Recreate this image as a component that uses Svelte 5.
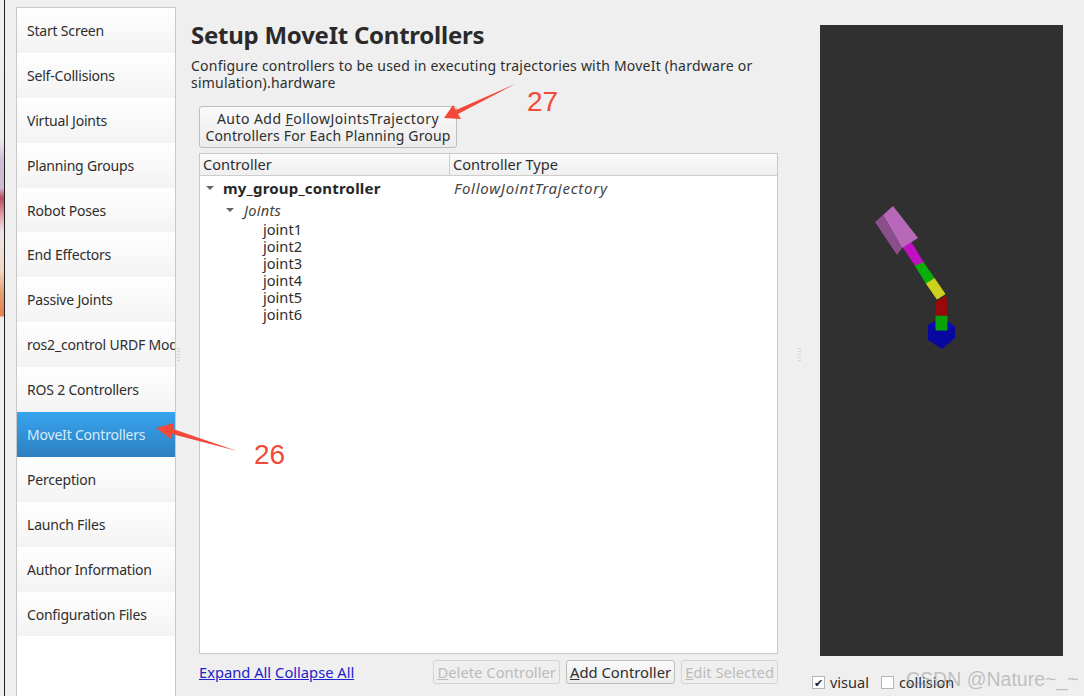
<script lang="ts">
  const steps = ['Start Screen', 'Self-Collisions', 'Virtual Joints', 'Planning Groups', 'Robot Poses', 'End Effectors', 'Passive Joints', 'ros2_control URDF Modifications', 'ROS 2 Controllers', 'MoveIt Controllers', 'Perception', 'Launch Files', 'Author Information', 'Configuration Files'];
  const joints = ['joint1', 'joint2', 'joint3', 'joint4', 'joint5', 'joint6'];
  const active = 'MoveIt Controllers';

  // robot arm, bottom to top
  const links = [
    { points: '76,126 87,126 87,140 76,140', color: '#0aa00a' },
    { points: '76,112 86,106 87,125 76,125', color: '#980a0a' },
    { points: '66,93 74,88 85,104 77,109', color: '#d0d020' },
    { points: '55,75 63,72 74,88 66,93', color: '#0ab00a' },
    { points: '43,57 51,52 63,72 55,75', color: '#c010c0' }
  ];
</script>

<div class="window">
  <div class="strip"></div>
  <div class="edge"></div>

  <nav class="steps">
    {#each steps as s}
      <div class="step" class:active={s === active}>{s}</div>
    {/each}
  </nav>

  <main class="content">
    <h1>Setup MoveIt Controllers</h1>
    <p class="desc">Configure controllers to be used in executing trajectories with MoveIt (hardware or simulation).hardware</p>

    <button class="btn auto"><span class="wide">Auto Add <u>F</u>ollowJointsTrajectory</span><br />Controllers For Each Planning Group</button>

    <div class="table">
      <div class="thead">
        <div class="th first">Controller</div>
        <div class="th">Controller Type</div>
      </div>
      <div class="tbody">
        <div class="row group">
          <span class="caret"></span>
          <span class="name">my_group_controller</span>
          <span class="type">FollowJointTrajectory</span>
        </div>
        <div class="row sub"><span class="caret"></span><em>Joints</em></div>
        <ul class="joints">
          {#each joints as j}<li>{j}</li>{/each}
        </ul>
      </div>
    </div>

    <div class="actions">
      <a href="#expand">Expand All</a>
      <a href="#collapse">Collapse All</a>
      <div class="spacer"></div>
      <button class="btn small off"><u>D</u>elete Controller</button>
      <button class="btn small"><u>A</u>dd Controller</button>
      <button class="btn small off"><u>E</u>dit Selected</button>
    </div>
  </main>

  <aside class="preview">
    <div class="viewport">
      <svg class="robot" viewBox="0 0 110 170" width="110" height="170">
        <polygon points="68,135 76,131 87,131 95,137 95,148 82,159 68,150" fill="#0808a0" />
        <polygon points="68,135 82,141 95,137 87,131 76,131" fill="#0a0ab8" />
        {#each links as l}
          <polygon points={l.points} fill={l.color} stroke={l.color} stroke-width="1" />
        {/each}
        <polygon points="23,25 33,16 58,48 42,58" fill="#b868b8" />
        <polygon points="15,32 23,25 42,58 37,65" fill="#8a4f8a" />
      </svg>
    </div>
    <div class="checks">
      <label class="check"><span class="box">✔</span>visual</label>
      <label class="check"><span class="box"></span>collision</label>
    </div>
  </aside>

  <!-- annotations pasted over the screenshot -->
  <svg class="notes" viewBox="0 0 1084 696" width="1084" height="696">
    <polygon points="515,84 458,114 461,119 444,118 453,105 456,110" fill="#f2493b" />
    <polygon points="237,451 172,434 171,439 156,428 174,423 173,429" fill="#f2493b" />
  </svg>
  <span class="num n27">27</span>
  <span class="num n26">26</span>
  <span class="handle h1"></span>
  <span class="handle h2"></span>
  <span class="mark">CSDN @Nature~_~</span>
</div>

<style>
  :global(body) { margin: 0; background: #efefef; }
  .window { position: relative; display: flex; width: 1084px; height: 696px; overflow: hidden; background: #efefef; color: #2e2e2e; font-family: "Noto Sans", "Open Sans", sans-serif; font-size: 14px; }
  .strip { width: 4px; flex-shrink: 0; background: linear-gradient(#f2f0f2 0, #efe8ee 140px, #cdbdd6 160px, #d0b8d0 188px, #b84a5c 198px, #e0a0a8 215px, #ece6e6 232px, #f2d8c4 270px, #e89a6a 295px, #e5824f 316px, #efefef 317px); }
  .edge { width: 1px; background: #222; flex-shrink: 0; }

  .steps { width: 158px; margin: 7px 0 0 11px; background: #fff; border: 1px solid #c8c8c8; border-bottom: none; flex-shrink: 0; overflow: hidden; }
  .step { box-sizing: border-box; height: 44.9px; padding-left: 10px; line-height: 46px; white-space: nowrap; overflow: hidden; background: linear-gradient(#fff, #f3f3f3); letter-spacing: -0.2px; }
  .step.active { background: linear-gradient(#37a4ee, #2d7fc0); color: #d5ecfb; }

  .content { width: 587px; margin-left: 15px; flex-shrink: 0; display: flex; flex-direction: column; }
  h1 { margin: 19px 0 0; font-size: 24px; line-height: 32px; font-weight: 700; color: #2a2a2a; letter-spacing: -0.25px; }
  .desc { margin: 6px 0 0; width: 584px; font-size: 14px; line-height: 17px; letter-spacing: 0.22px; }

  .btn { box-sizing: border-box; border: 1px solid #bdbdbd; border-radius: 3px; background: linear-gradient(#fafafa, #ececec); color: #2e2e2e; font: inherit; padding: 0; }
  .auto { align-self: flex-start; margin: 15px 0 0 8px; width: 258px; height: 42px; line-height: 17px; letter-spacing: 0.17px; }
  .wide { letter-spacing: 0.45px; }

  .table { margin: 5px 0 0 8px; height: 501px; box-sizing: border-box; border: 1px solid #c8c8c8; background: #fff; }
  .thead { display: flex; height: 21px; border-bottom: 1px solid #cdcdcd; background: linear-gradient(#fbfbfb, #efefef); line-height: 21px; font-size: 14.6px; }
  .th { padding-left: 3px; }
  .th.first { width: 246px; border-right: 1px solid #cdcdcd; }
  .row { display: flex; align-items: center; }
  .caret { width: 0; height: 0; border: 4px solid transparent; border-top: 4px solid #666; border-bottom: none; }
  .group { height: 23px; padding-left: 6px; font-size: 15px; }
  .name { margin-left: 9px; width: 231px; font-weight: 700; letter-spacing: 0.2px; color: #262626; }
  .type { font-style: italic; color: #444; letter-spacing: 0.75px; }
  .sub { height: 17px; margin-top: 2px; padding-left: 26px; font-size: 14.5px; }
  .sub em { margin-left: 10px; color: #444; letter-spacing: 0.3px; }
  .joints { margin: 3px 0 0; padding: 0 0 0 63px; list-style: none; line-height: 17px; font-size: 14.6px; }

  .actions { display: flex; align-items: center; gap: 6px; height: 24px; margin: 6px 0 0 8px; font-size: 14.7px; }
  .actions a { color: #2222cc; margin-right: -2px; }
  .spacer { flex: 1; }
  .small { height: 24px; padding: 0 3px; white-space: nowrap; font-size: 14.8px; }
  .off { color: #bbb; border-color: #d4d4d4; background: #efefef; }

  .preview { margin-left: 42px; width: 243px; flex-shrink: 0; }
  .viewport { margin-top: 25px; height: 631px; background: #303030; position: relative; }
  .robot { position: absolute; left: 40px; top: 165px; }
  .checks { display: flex; gap: 12px; margin: 17px 0 0 -8px; line-height: 18px; font-size: 14.5px; }
  .check { display: flex; align-items: center; gap: 5px; }
  .box { box-sizing: border-box; display: block; width: 13px; height: 13px; border: 1px solid #b5b5b5; background: #fff; font-size: 11px; line-height: 12px; text-align: center; color: #222; }

  .notes { position: absolute; left: 0; top: 0; pointer-events: none; }
  .num { position: absolute; color: #f2493b; font-family: "Liberation Sans", sans-serif; font-size: 28px; line-height: 32px; }
  .n27 { left: 527px; top: 86px; }
  .n26 { left: 254px; top: 439px; }
  .handle { position: absolute; top: 348px; width: 3px; height: 14px; background: repeating-linear-gradient(#d4d4d4 0 1px, transparent 1px 3px); }
  .h1 { left: 177px; }
  .h2 { left: 798px; }
  .mark { position: absolute; left: 906px; top: 668px; color: rgba(150, 150, 150, 0.55); font-family: "Liberation Sans", sans-serif; font-size: 19.5px; white-space: nowrap; }
</style>
